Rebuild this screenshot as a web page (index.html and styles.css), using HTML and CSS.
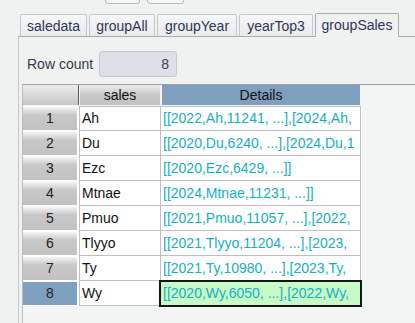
FILE: index.html
```html
<!DOCTYPE html>
<html lang="en">
<head>
    <meta charset="UTF-8">
    <meta name="viewport" content="width=device-width, initial-scale=1.0">
    <title>groupSales</title>
    <link rel="stylesheet" href="styles.css">
</head>
<body>
    <!-- toolbar buttons, cut off at the top -->
    <div class="toolbar">
        <div class="tool-btn"></div>
        <div class="tool-btn wide"></div>
    </div>

    <div class="tabs">
        <div class="tab w-saledata">saledata</div>
        <div class="tab w-groupall">groupAll</div>
        <div class="tab w-groupyear">groupYear</div>
        <div class="tab w-yeartop3">yearTop3</div>
        <div class="tab w-groupsales active">groupSales</div>
    </div>

    <div class="panel">
        <div class="count-row">
            <span class="count-label">Row count</span>
            <div class="count-box">8</div>
        </div>

        <div class="scroll-pane">
            <div class="grid-row head">
                <div class="corner"></div>
                <div class="col-head">sales</div>
                <div class="col-head selected">Details</div>
            </div>

            <div class="rows">
                <div class="grid-row">
                    <div class="rh">1</div>
                    <div class="cell">Ah</div>
                    <div class="cell details">[[2022,Ah,11241, ...],[2024,Ah,</div>
                </div>
                <div class="grid-row">
                    <div class="rh">2</div>
                    <div class="cell">Du</div>
                    <div class="cell details">[[2020,Du,6240, ...],[2024,Du,1</div>
                </div>
                <div class="grid-row">
                    <div class="rh">3</div>
                    <div class="cell">Ezc</div>
                    <div class="cell details">[[2020,Ezc,6429, ...]]</div>
                </div>
                <div class="grid-row">
                    <div class="rh">4</div>
                    <div class="cell">Mtnae</div>
                    <div class="cell details">[[2024,Mtnae,11231, ...]]</div>
                </div>
                <div class="grid-row">
                    <div class="rh">5</div>
                    <div class="cell">Pmuo</div>
                    <div class="cell details">[[2021,Pmuo,11057, ...],[2022,</div>
                </div>
                <div class="grid-row">
                    <div class="rh">6</div>
                    <div class="cell">Tlyyo</div>
                    <div class="cell details">[[2021,Tlyyo,11204, ...],[2023,</div>
                </div>
                <div class="grid-row">
                    <div class="rh">7</div>
                    <div class="cell">Ty</div>
                    <div class="cell details">[[2021,Ty,10980, ...],[2023,Ty,</div>
                </div>
                <div class="grid-row">
                    <div class="rh selected">8</div>
                    <div class="cell">Wy</div>
                    <div class="cell details focused">[[2020,Wy,6050, ...],[2022,Wy,</div>
                </div>
            </div>
        </div>
    </div>
</body>
</html>
```

FILE: styles.css
```css
body {
    margin: 0;
    background-color: #f0f1f1;
    font-family: "Liberation Sans", Arial, sans-serif;
    font-size: 14px;
    color: #111111;
    overflow: hidden;
}
.toolbar {
    display: flex;
    align-items: flex-end;
    gap: 7px;
    height: 4px;
    padding-left: 105px;
    overflow: hidden;
}
.tool-btn {
    flex-shrink: 0;
    width: 33px;
    height: 12px;
    border: 1px solid #b4b8bc;
    border-radius: 3px;
    background-color: #f6f6f6;
}
.tool-btn.wide {
    width: 35px;
}
.tabs {
    display: flex;
    align-items: flex-end;
    gap: 2px;
    margin-top: 9px;
    padding-left: 20px;
    height: 23px;
}
.tab {
    box-sizing: border-box;
    height: 22px;
    border: 1px solid #c4c8cc;
    border-bottom: none;
    border-radius: 2px 2px 0 0;
    background: linear-gradient(#f6f7f8, #e8eaec);
    color: #2d3656;
    text-align: center;
    line-height: 22px;
}
.tab.active {
    position: relative;
    height: 24px;
    margin-bottom: -1px;
    border-color: #a8acb0;
    background: #f0f1f1;
    line-height: 23px;
}
.w-saledata { width: 67px; }
.w-groupall { width: 66px; }
.w-groupyear { width: 80px; }
.w-yeartop3 { width: 74px; }
.w-groupsales { width: 84px; }
.panel {
    margin-left: 18px;
    height: 300px;
    border-top: 1px solid #a8acb0;
    border-left: 1px solid #c4c8cc;
}
.count-row {
    display: flex;
    align-items: center;
    padding: 14px 0 0 8px;
}
.count-label {
    width: 72px;
    color: #333a4a;
    font-size: 14px;
}
.count-box {
    box-sizing: border-box;
    width: 78px;
    height: 26px;
    padding-right: 7px;
    border: 1px solid #c6cacf;
    border-radius: 3px;
    background-color: #dde0e6;
    color: #3a3f4a;
    text-align: right;
    line-height: 24px;
}
.scroll-pane {
    margin: 7px 0 0 3px;
    height: 240px;
    border-top: 1px solid #9ea2a6;
    border-left: 1px solid #b8bcc0;
    background-color: #f3f4f4;
}
.grid-row {
    display: grid;
    grid-template-columns: 56px 81px 201px;
    height: 25px;
}
.grid-row.head {
    height: 20px;
    margin-bottom: 1px;
}
.corner {
    border-right: 1px solid #5a5a5a;
    background: linear-gradient(#ececec, #c6c6c6);
}
.col-head {
    margin-left: 1px;
    background: linear-gradient(#ececec, #c8c8c8 50%, #c2c2c2);
    text-align: center;
    line-height: 20px;
}
.col-head.selected {
    margin-left: 2px;
    margin-right: 1px;
    background: #7f9fbf;
}
.rows {
    background-color: #ffffff;
    width: 339px;
}
.rh {
    margin: 1px 2px 1px 0;
    background: linear-gradient(#f4f4f4, #c8c8c8 35%, #c2c2c2);
    text-align: center;
    line-height: 23px;
    color: #222222;
}
.rh.selected {
    background: #7f9fbf;
}
.cell {
    padding-left: 2px;
    border-left: 1px solid #c0c0c0;
    border-bottom: 1px solid #c0c0c0;
    background-color: #ffffff;
    line-height: 24px;
    white-space: nowrap;
    overflow: hidden;
}
.grid-row:first-child .cell {
    border-top: 1px solid #c0c0c0;
    line-height: 23px;
}
.cell.details {
    border-right: 1px solid #c0c0c0;
    color: #14b0c0;
}
.cell.focused {
    background-color: #c8fac8;
    outline: 2px solid #151515;
    outline-offset: -1px;
}
```
